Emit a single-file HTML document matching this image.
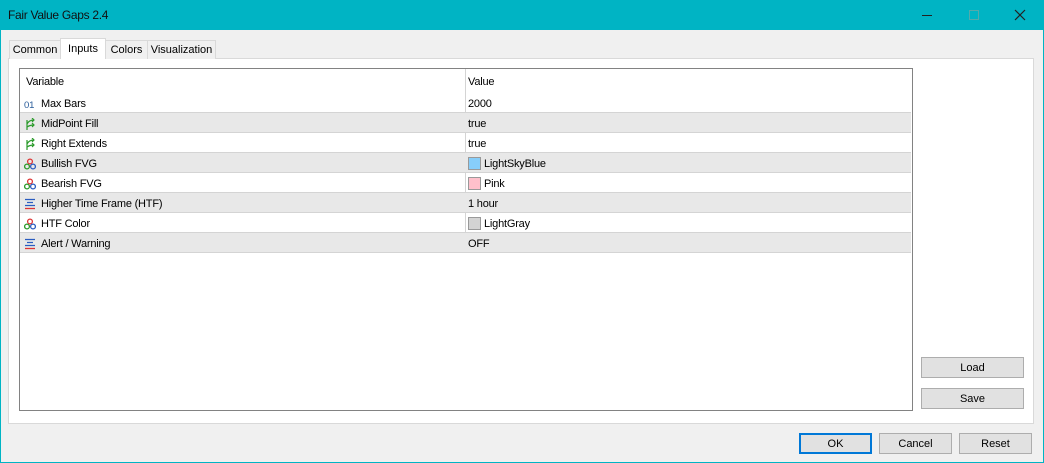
<!DOCTYPE html>
<html><head><meta charset="utf-8"><style>
*{box-sizing:border-box;margin:0;padding:0}
body{width:1044px;height:463px;background:#00b4c4;font-family:"Liberation Sans",sans-serif;font-size:11px;color:#000;position:relative;overflow:hidden}
.win{position:absolute;left:1px;top:30px;width:1042px;height:432px;background:#f0f0f0}
.title{position:absolute;left:8px;top:8px;font-size:12px;color:#111;letter-spacing:-0.3px}
.tc{position:absolute;top:0;height:30px;width:46px;text-align:center;line-height:30px}
.tab{position:absolute;top:40px;height:19px;border:1px solid #d9d9d9;border-bottom:none;background:#f0f0f0;text-align:center;line-height:19px}
.tab.act{top:38px;height:21px;background:#fff;z-index:2;line-height:20px}
.panel{position:absolute;left:8px;top:58px;width:1026px;height:366px;background:#fff;border:1px solid #d9d9d9}
.grid{position:absolute;left:19px;top:68px;width:894px;height:343px;border:1px solid #828282;background:#fff;letter-spacing:-0.2px}
.row{position:absolute;left:0;width:891px;height:20px;border-bottom:1px solid #d4d4d4;line-height:22px}
.row.g{background:#e8e8e8}
.row .a{position:absolute;left:21px}
.row .b{position:absolute;left:448px}
.ic{position:absolute;left:4px;top:5px;width:12px;height:12px}
.div{position:absolute;left:445px;top:0;width:1px;height:184px;background:#d4d4d4}
.sw{display:inline-block;width:13px;height:13px;border:1px solid #999;vertical-align:-3px;margin-right:3px}
.btn{position:absolute;height:21px;border:1px solid #adadad;background:#e1e1e1;text-align:center;line-height:21px;font-size:11px}
</style></head><body>
<div class="title">Fair Value Gaps 2.4</div>
<div class="tc" style="left:905px"><div style="position:absolute;left:17px;top:15px;width:10px;height:1px;background:#222"></div></div>
<div class="tc" style="left:951px"><div style="position:absolute;left:18px;top:10px;width:10px;height:10px;border:1px solid #5aa"></div></div>
<div class="tc" style="left:997px"><svg style="position:absolute;left:17px;top:9px" width="12" height="12"><path d="M1 1L11 11M11 1L1 11" stroke="#222" stroke-width="1.2"/></svg></div>
<div class="win"></div>
<div class="panel"></div>
<div class="tab" style="left:9px;width:52px">Common</div>
<div class="tab act" style="left:60px;width:46px">Inputs</div>
<div class="tab" style="left:105px;width:43px">Colors</div>
<div class="tab" style="left:147px;width:69px">Visualization</div>
<div class="grid">
<div class="div" style="top:0"></div>
<div class="row" style="top:0;height:24px;border:none;line-height:26px"><span class="a" style="left:6px">Variable</span><span class="b">Value</span></div>
<div class="row" style="top:24px"><svg class="ic" width="12" height="12" viewBox="0 0 12 12"><text x="0" y="10" font-size="9.5" fill="#2a5c9a" font-family="Liberation Sans">01</text></svg><span class="a">Max Bars</span><span class="b">2000</span></div>
<div class="row g" style="top:44px"><svg class="ic" width="12" height="12" viewBox="0 0 12 12"><path d="M3 12V2M3 6Q5 2 10 2M8 0l2 2-2 2M3 9Q6 7 10 7M8 5l2 2-2 2" stroke="#2a9a2a" fill="none" stroke-width="1.2"/></svg><span class="a">MidPoint Fill</span><span class="b">true</span></div>
<div class="row" style="top:64px"><svg class="ic" width="12" height="12" viewBox="0 0 12 12"><path d="M3 12V2M3 6Q5 2 10 2M8 0l2 2-2 2M3 9Q6 7 10 7M8 5l2 2-2 2" stroke="#2a9a2a" fill="none" stroke-width="1.2"/></svg><span class="a">Right Extends</span><span class="b">true</span></div>
<div class="row g" style="top:84px"><svg class="ic" width="12" height="12" viewBox="0 0 12 12"><circle cx="6" cy="3.5" r="2.4" fill="none" stroke="#d33" stroke-width="1.3"/><circle cx="3" cy="8.5" r="2.4" fill="none" stroke="#2a9a2a" stroke-width="1.3"/><circle cx="9" cy="8.5" r="2.4" fill="none" stroke="#2a5cc0" stroke-width="1.3"/></svg><span class="a">Bullish FVG</span><span class="b"><span class="sw" style="background:#87cefa"></span>LightSkyBlue</span></div>
<div class="row" style="top:104px"><svg class="ic" width="12" height="12" viewBox="0 0 12 12"><circle cx="6" cy="3.5" r="2.4" fill="none" stroke="#d33" stroke-width="1.3"/><circle cx="3" cy="8.5" r="2.4" fill="none" stroke="#2a9a2a" stroke-width="1.3"/><circle cx="9" cy="8.5" r="2.4" fill="none" stroke="#2a5cc0" stroke-width="1.3"/></svg><span class="a">Bearish FVG</span><span class="b"><span class="sw" style="background:#ffc0cb"></span>Pink</span></div>
<div class="row g" style="top:124px"><svg class="ic" width="12" height="12" viewBox="0 0 12 12"><path d="M1 1.5h10M3 4.5h6M1 7.5h10" stroke="#2a5cc0" stroke-width="1.3"/><path d="M1 10.5h10" stroke="#d33" stroke-width="1.3"/></svg><span class="a">Higher Time Frame (HTF)</span><span class="b">1 hour</span></div>
<div class="row" style="top:144px"><svg class="ic" width="12" height="12" viewBox="0 0 12 12"><circle cx="6" cy="3.5" r="2.4" fill="none" stroke="#d33" stroke-width="1.3"/><circle cx="3" cy="8.5" r="2.4" fill="none" stroke="#2a9a2a" stroke-width="1.3"/><circle cx="9" cy="8.5" r="2.4" fill="none" stroke="#2a5cc0" stroke-width="1.3"/></svg><span class="a">HTF Color</span><span class="b"><span class="sw" style="background:#d3d3d3"></span>LightGray</span></div>
<div class="row g" style="top:164px"><svg class="ic" width="12" height="12" viewBox="0 0 12 12"><path d="M1 1.5h10M3 4.5h6M1 7.5h10" stroke="#2a5cc0" stroke-width="1.3"/><path d="M1 10.5h10" stroke="#d33" stroke-width="1.3"/></svg><span class="a">Alert / Warning</span><span class="b">OFF</span></div>
</div>
<div class="btn" style="left:921px;top:357px;width:103px">Load</div>
<div class="btn" style="left:921px;top:388px;width:103px">Save</div>
<div class="btn" style="left:799px;top:433px;width:73px;border:2px solid #0078d7;line-height:19px">OK</div>
<div class="btn" style="left:879px;top:433px;width:73px">Cancel</div>
<div class="btn" style="left:959px;top:433px;width:73px">Reset</div>
</body></html>
